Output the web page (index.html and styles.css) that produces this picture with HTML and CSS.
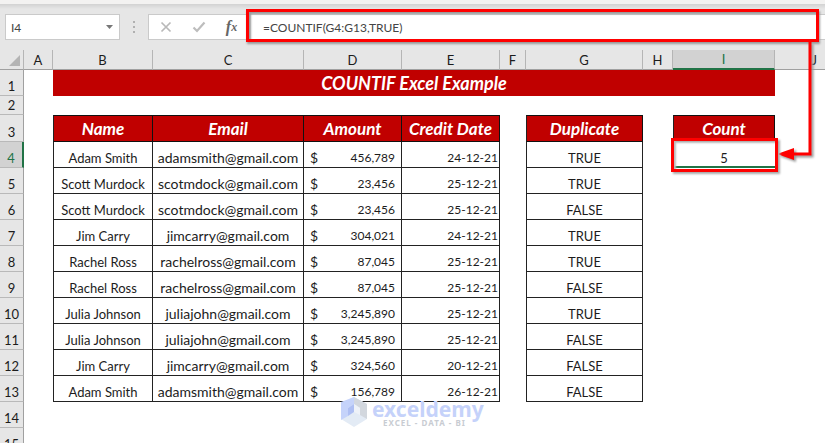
FILE: index.html
```
<!DOCTYPE html>
<html lang="en">
<head>
<meta charset="utf-8">
<title>COUNTIF Excel Example</title>
<link rel="stylesheet" href="styles.css">
</head>
<body>
<header class="toolbar">
  <div class="name-box">
    <input class="name-input" type="text" value="I4" aria-label="Name box">
    <button class="name-toggle" type="button" aria-label="Show names"><svg width="7" height="4" viewBox="0 0 7 4"><path d="M0 0h7L3.500 4z" fill="#777"/></svg></button>
  </div>
  <svg class="grip" width="2" height="12" viewBox="0 0 2 12"><path d="M0 0h2v2H0zM0 5h2v2H0zM0 10h2v2H0z" fill="#b0b0b0"/></svg>
  <div class="formula-bar">
    <button class="tool" type="button" aria-label="Cancel"><svg width="12" height="12" viewBox="0 0 12 12"><path d="M1.500 1.500l9 9M10.500 1.500l-9 9" stroke="#b9b9b9" stroke-width="1.700" fill="none"/></svg></button>
    <button class="tool" type="button" aria-label="Enter"><svg width="14" height="12" viewBox="0 0 14 12"><path d="M1.500 6.500l3.500 3.500L12.500 1.500" stroke="#bdbdbd" stroke-width="2.200" fill="none"/></svg></button>
    <button class="tool fx" type="button" aria-label="Insert function">f<sub>x</sub></button>
    <div class="formula">
      <input class="formula-input" type="text" value="=COUNTIF(G4:G13,TRUE)" aria-label="Formula">
    </div>
  </div>
</header>
<main class="sheet">
<table class="grid">
  <colgroup><col class="w-head"><col class="w-a"><col class="w-b"><col class="w-c"><col class="w-d"><col class="w-e"><col class="w-f"><col class="w-g"><col class="w-h"><col class="w-i"><col></colgroup>
  <thead>
    <tr class="letters"><th class="corner"><svg width="11" height="11" viewBox="0 0 11 11"><path d="M11 0v11H0z" fill="#b4b4b4"/></svg></th><th>A</th><th>B</th><th>C</th><th>D</th><th>E</th><th>F</th><th>G</th><th>H</th><th class="active">I</th><th class="last">J</th></tr>
  </thead>
  <tbody>
    <tr class="title-row"><th class="num">1</th><td></td><td class="title" colspan="8">COUNTIF Excel Example</td><td></td></tr>
    <tr class="gap-row"><th class="num">2</th><td colspan="10"></td></tr>
    <tr class="head-row"><th class="num">3</th><td></td><th class="label first">Name</th><th class="label">Email</th><th class="label">Amount</th><th class="label">Credit Date</th><td></td><th class="label first">Duplicate</th><td></td><th class="label first">Count</th><td></td></tr>
    <tr><th class="num active">4</th><td></td><td class="cell first">Adam Smith</td><td class="cell email">adamsmith@gmail.com</td><td class="cell"><span class="money"><span class="sign">$</span><span>456,789</span></span></td><td class="cell date">24-12-21</td><td></td><td class="cell first">TRUE</td><td></td><td class="result">5<svg class="arrow" width="46" height="132" viewBox="0 0 46 132"><path d="M35 0V112H12" fill="none" stroke="#f00" stroke-width="3"/><path d="M2 112l17-6v12z" fill="#f00"/></svg></td><td></td></tr>
    <tr><th class="num">5</th><td></td><td class="cell first">Scott Murdock</td><td class="cell email">scotmdock@gmail.com</td><td class="cell"><span class="money"><span class="sign">$</span><span>23,456</span></span></td><td class="cell date">25-12-21</td><td></td><td class="cell first">TRUE</td><td colspan="3"></td></tr>
    <tr><th class="num">6</th><td></td><td class="cell first">Scott Murdock</td><td class="cell email">scotmdock@gmail.com</td><td class="cell"><span class="money"><span class="sign">$</span><span>23,456</span></span></td><td class="cell date">25-12-21</td><td></td><td class="cell first">FALSE</td><td colspan="3"></td></tr>
    <tr><th class="num">7</th><td></td><td class="cell first">Jim Carry</td><td class="cell email">jimcarry@gmail.com</td><td class="cell"><span class="money"><span class="sign">$</span><span>304,021</span></span></td><td class="cell date">24-12-21</td><td></td><td class="cell first">TRUE</td><td colspan="3"></td></tr>
    <tr><th class="num">8</th><td></td><td class="cell first">Rachel Ross</td><td class="cell email">rachelross@gmail.com</td><td class="cell"><span class="money"><span class="sign">$</span><span>87,045</span></span></td><td class="cell date">25-12-21</td><td></td><td class="cell first">TRUE</td><td colspan="3"></td></tr>
    <tr><th class="num">9</th><td></td><td class="cell first">Rachel Ross</td><td class="cell email">rachelross@gmail.com</td><td class="cell"><span class="money"><span class="sign">$</span><span>87,045</span></span></td><td class="cell date">25-12-21</td><td></td><td class="cell first">FALSE</td><td colspan="3"></td></tr>
    <tr><th class="num">10</th><td></td><td class="cell first">Julia Johnson</td><td class="cell email">juliajohn@gmail.com</td><td class="cell"><span class="money"><span class="sign">$</span><span>3,245,890</span></span></td><td class="cell date">25-12-21</td><td></td><td class="cell first">TRUE</td><td colspan="3"></td></tr>
    <tr><th class="num">11</th><td></td><td class="cell first">Julia Johnson</td><td class="cell email">juliajohn@gmail.com</td><td class="cell"><span class="money"><span class="sign">$</span><span>3,245,890</span></span></td><td class="cell date">25-12-21</td><td></td><td class="cell first">FALSE</td><td colspan="3"></td></tr>
    <tr><th class="num">12</th><td></td><td class="cell first">Jim Carry</td><td class="cell email">jimcarry@gmail.com</td><td class="cell"><span class="money"><span class="sign">$</span><span>324,560</span></span></td><td class="cell date">20-12-21</td><td></td><td class="cell first">FALSE</td><td colspan="3"></td></tr>
    <tr><th class="num">13</th><td></td><td class="cell first">Adam Smith</td><td class="cell email">adamsmith@gmail.com</td><td class="cell"><span class="money"><span class="sign">$</span><span>156,789</span></span></td><td class="cell date">26-12-21</td><td></td><td class="cell first">FALSE</td><td colspan="3"></td></tr>
    <tr><th class="num">14</th><td colspan="10"></td></tr>
    <tr><th class="num">15</th><td colspan="10"></td></tr>
  </tbody>
</table>
<div class="watermark">
  <svg width="28" height="32" viewBox="0 0 28 32"><path d="M14 1l13 7v15l-13 8-13-8V8z" fill="#e3ebf5"/><path d="M14 1L1 6v18l7-4v-8l6-4z" fill="#c5d3fa"/><path d="M14 1l13 7v15l-7-4v-7l-6-4z" fill="#d2d7de"/><path d="M8 12l6-4v8l-6 4z" fill="#aebff3"/><path d="M14 8l6 4v7l-6-3z" fill="#eef2f8"/></svg>
  <div class="brand"><span class="brand-name">exceldemy</span><span class="brand-tag">EXCEL - DATA - BI</span></div>
</div>
</main>
</body>
</html>
```
FILE: styles.css
```
* { box-sizing: border-box; }
body {
  margin: 0;
  height: 100vh;
  overflow: hidden;
  background: #fff;
  color: #1c1c1c;
  font-family: Lato, "Liberation Sans", sans-serif;
  font-size: 13px;
}
button, input {
  margin: 0;
  padding: 0;
  border: 0;
  background: none;
  font: inherit;
  color: inherit;
}
.toolbar {
  display: flex;
  align-items: center;
  height: 50px;
  padding: 4px 0 0 5px;
  background: linear-gradient(#f3f2f1 4px, #d2d2d2 4px, #e6e6e6 9px);
}
.name-box {
  display: flex;
  align-items: center;
  width: 115px;
  height: 26px;
  padding: 0 6px 0 5px;
  border: 1px solid #cacaca;
  background: #fff;
}
.name-input { flex: 1; min-width: 0; font-size: 12px; color: #444; }
.name-toggle { display: flex; }
.grip { margin: 0 13px; }
.formula-bar {
  flex: 1;
  display: flex;
  height: 26px;
  border: 1px solid #cacaca;
  border-right: 0;
  background: #fff;
}
.tool {
  display: flex;
  align-items: center;
  justify-content: center;
  width: 33px;
}
.fx {
  font: italic bold 16px/24px "Liberation Serif", serif;
  color: #666;
}
.fx sub { font-size: 12px; line-height: 12px; }
.formula {
  position: relative;
  flex: 1;
  display: flex;
  padding-left: 15px;
}
.formula::after {
  content: "";
  position: absolute;
  inset: -6px 6px -3px -2px;
  border: 3px solid #f00;
  box-shadow: 1px 2px 2px #999, inset 2px 2px 2px #999;
  pointer-events: none;
}
.formula-input { flex: 1; min-width: 0; font-size: 12px; color: #444; }
.sheet { position: relative; }
.grid {
  width: 100%;
  table-layout: fixed;
  border-collapse: separate;
  border-spacing: 0;
}
.w-head { width: 24px; }
.w-a { width: 29px; }
.w-b { width: 100px; }
.w-c { width: 151px; }
.w-d { width: 98px; }
.w-e { width: 98px; }
.w-f { width: 26px; }
.w-g { width: 117px; }
.w-h { width: 30px; }
.w-i { width: 102px; }
th, td {
  height: 26px;
  padding: 0;
  line-height: 18px;
  text-align: center;
  vertical-align: bottom;
  white-space: nowrap;
  font-weight: normal;
}
.letters th {
  height: 20px;
  border-right: 1px solid #b5b5b5;
  border-bottom: 1px solid #a0a0a0;
  background: #e6e6e6;
}
.letters .corner { line-height: 0; text-align: right; padding: 0 3px 3px 0; }
.letters .active { background: #d2d2d2; border-bottom: 2px solid #217346; color: #217346; }
.letters .last { text-align: right; padding-right: 8px; border-right: 0; }
.num {
  border-right: 1px solid #a0a0a0;
  border-bottom: 1px solid #b9b9b9;
  background: #e6e6e6;
}
.num.active { border-right: 2px solid #217346; background: #d2d2d2; color: #217346; }
.gap-row > * { height: 19px; }
.head-row > * { height: 27px; }
.title, .label {
  background: #c00000;
  color: #fff;
  font-size: 17px;
  font-weight: bold;
  font-style: italic;
  line-height: 20px;
  vertical-align: middle;
}
.title { font-size: 18px; }
.label { border: 1px solid #111; border-left: 0; }
.cell { border-right: 1px solid #222; border-bottom: 1px solid #222; }
.first { border-left: 1px solid #222; }
.email { font-size: 14px; }
.money { display: flex; justify-content: space-between; padding: 0 6px; font-size: 12px; }
.sign { font-size: 14px; }
.date { text-align: right; padding-right: 1px; font-size: 12px; }
.result { position: relative; border-bottom: 2px solid #217346; line-height: 16px; }
.result::after {
  content: "";
  position: absolute;
  inset: -4px -3px -6px -2px;
  border: 3px solid #f00;
  box-shadow: 2px 2px 2px #aaa, inset 2px 2px 2px #bbb;
}
.arrow {
  position: absolute;
  left: 100%;
  bottom: -8px;
  filter: drop-shadow(2px 2px 1px #999);
}
.watermark {
  position: absolute;
  top: 346px;
  left: 340px;
  display: flex;
  gap: 4px;
  align-items: center;
}
.brand { display: flex; flex-direction: column; padding-top: 2px; }
.brand-name {
  font: bold 21px/18px "Noto Sans", sans-serif;
  color: #c5d2fa;
}
.brand-tag {
  padding-left: 11px;
  font: bold 8px/9px "Noto Sans", sans-serif;
  letter-spacing: 1px;
  color: #c8ccd2;
}
```
